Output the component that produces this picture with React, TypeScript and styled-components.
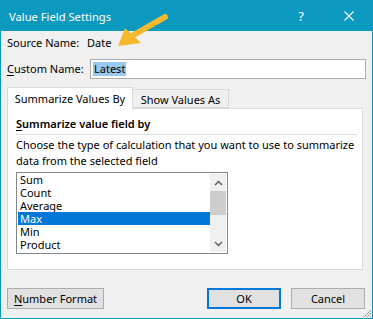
import React from "react";
import styled, { createGlobalStyle } from "styled-components";

const Global = createGlobalStyle`
  html, body { margin: 0; padding: 0; background: #ffffff; }
  * { box-sizing: border-box; }
`;

const FONT = `"Noto Sans", "Open Sans", sans-serif`;

const Window = styled.div`
  position: relative;
  width: 373px;
  height: 319px;
  background: #f0f0f0;
  border: 1px solid #0b99bf;
  border-top: none;
  font-family: ${FONT};
  font-size: 11px;
  color: #000;
  display: flex;
  flex-direction: column;
  overflow: hidden;
`;

const TitleBar = styled.div`
  height: 31px;
  margin: 0 -1px;
  background: #0b99bf;
  color: #fff;
  display: flex;
  align-items: center;
  padding-left: 9px;
  padding-right: 19px;
  font-size: 11.2px;
`;

const Title = styled.span`
  flex: 1;
  padding-top: 1px;
`;

const TitleButton = styled.span<{ $w: number }>`
  width: ${(p) => p.$w}px;
  display: flex;
  justify-content: center;
  align-items: center;
`;

const Body = styled.div`
  flex: 1;
  display: flex;
  flex-direction: column;
  padding: 4px 6px 0 6px;
`;

const Row = styled.div<{ $mt?: number }>`
  display: flex;
  align-items: center;
  line-height: 16px;
  margin-top: ${(p) => p.$mt ?? 0}px;
`;

const Label = styled.span<{ $w: number }>`
  width: ${(p) => p.$w}px;
  white-space: nowrap;
`;

const Input = styled.div`
  width: 276px;
  height: 20px;
  background: #fff;
  border: 1px solid #acacac;
  display: flex;
  align-items: center;
  padding-left: 2px;
`;

const Selected = styled.span`
  background: #99c9ef;
  line-height: 14px;
  padding: 0 1px;
`;

const U = styled.span`
  text-decoration: underline;
  text-underline-offset: 2px;
`;

const Tabs = styled.div`
  display: flex;
  align-items: flex-end;
  margin-top: 8px;
  height: 21px;
  position: relative;
  z-index: 1;
`;

const Tab = styled.div<{ $active?: boolean }>`
  height: ${(p) => (p.$active ? 22 : 19)}px;
  width: ${(p) => (p.$active ? 126 : 96)}px;
  background: ${(p) => (p.$active ? "#fff" : "#f0f0f0")};
  border: 1px solid #d9d9d9;
  border-bottom: ${(p) => (p.$active ? "none" : "1px solid #d9d9d9")};
  border-left: ${(p) => (p.$active ? "1px solid #d9d9d9" : "none")};
  display: flex;
  align-items: center;
  justify-content: center;
  white-space: nowrap;
  padding-top: ${(p) => (p.$active ? 0 : 1)}px;
  margin-bottom: ${(p) => (p.$active ? -1 : 0)}px;
`;

const Panel = styled.div`
  width: 356px;
  height: 162px;
  background: #fff;
  border: 1px solid #d9d9d9;
  padding: 7px 5px 0 8px;
  display: flex;
  flex-direction: column;
`;

const SectionTitle = styled.div`
  font-weight: 600;
  line-height: 16px;
  padding-bottom: 2px;
  border-bottom: 1px solid #dcdcdc;
`;

const Description = styled.div`
  line-height: 16px;
  margin-top: 2px;
  white-space: nowrap;
`;

const ListBox = styled.div`
  margin-top: 3px;
  width: 212px;
  height: 82px;
  border: 1px solid #828790;
  display: flex;
  background: #fff;
`;

const Items = styled.div`
  flex: 1;
  padding: 0 0 0 1px;
  display: flex;
  flex-direction: column;
`;

const Item = styled.div<{ $sel?: boolean }>`
  height: 13px;
  line-height: 13px;
  padding-left: 2px;
  background: ${(p) => (p.$sel ? "#0078d7" : "transparent")};
  color: ${(p) => (p.$sel ? "#fff" : "#000")};
`;

const ScrollBar = styled.div`
  width: 16px;
  margin: 1px 1px 1px 0;
  background: #f0f0f0;
  display: flex;
  flex-direction: column;
  align-items: center;
`;

const ScrollArrow = styled.div`
  height: 17px;
  width: 100%;
  display: flex;
  align-items: center;
  justify-content: center;
`;

const Thumb = styled.div`
  width: 100%;
  height: 24px;
  background: #cdcdcd;
`;

const Spacer = styled.div`
  flex: 1;
`;

const Buttons = styled.div`
  display: flex;
  margin-top: 18px;
  height: 21px;
`;

const Button = styled.div<{ $w: number; $focus?: boolean }>`
  width: ${(p) => p.$w}px;
  height: 21px;
  background: #e1e1e1;
  border: ${(p) => (p.$focus ? "2px solid #0078d7" : "1px solid #adadad")};
  display: flex;
  align-items: center;
  justify-content: center;
  white-space: nowrap;
`;

const Gap = styled.div<{ $w: number }>`
  width: ${(p) => p.$w}px;
`;

const Overlay = styled.svg`
  position: absolute;
  left: 0;
  top: 0;
  pointer-events: none;
`;

const Grip = styled.svg`
  position: absolute;
  right: 0;
  bottom: 0;
`;

export default function App() {
  return (
    <>
      <Global />
      <Window>
        <TitleBar>
          <Title>Value Field Settings</Title>
          <TitleButton $w={10}>
            <span style={{ fontSize: 13 }}>?</span>
          </TitleButton>
          <Gap $w={38} />
          <TitleButton $w={10}>
            <svg width="10" height="10" viewBox="0 0 10 10">
              <path d="M0.5 0.5 L9.5 9.5 M9.5 0.5 L0.5 9.5" stroke="#fff" strokeWidth="1.1" fill="none" />
            </svg>
          </TitleButton>
        </TitleBar>
        <Body>
          <Row>
            <Label $w={80}>Source Name:</Label>
            <span>Date</span>
          </Row>
          <Row $mt={8}>
            <Label $w={83}>
              <U>C</U>ustom Name:
            </Label>
            <Input>
              <Selected>Latest</Selected>
            </Input>
          </Row>
          <Tabs>
            <Tab $active>Summarize Values By</Tab>
            <Tab>Show Values As</Tab>
          </Tabs>
          <Panel>
            <SectionTitle>
              <U>S</U>ummarize value field by
            </SectionTitle>
            <Description>
              Choose the type of calculation that you want to use to summarize
              <br />
              data from the selected field
            </Description>
            <ListBox>
              <Items>
                <Item>Sum</Item>
                <Item>Count</Item>
                <Item>Average</Item>
                <Item $sel>Max</Item>
                <Item>Min</Item>
                <Item>Product</Item>
              </Items>
              <ScrollBar>
                <ScrollArrow>
                  <svg width="9" height="6" viewBox="0 0 9 6">
                    <path d="M1 5 L4.5 1.5 L8 5" stroke="#606060" strokeWidth="1.5" fill="none" />
                  </svg>
                </ScrollArrow>
                <Thumb />
                <Spacer />
                <ScrollArrow>
                  <svg width="9" height="6" viewBox="0 0 9 6">
                    <path d="M1 1 L4.5 4.5 L8 1" stroke="#606060" strokeWidth="1.5" fill="none" />
                  </svg>
                </ScrollArrow>
              </ScrollBar>
            </ListBox>
          </Panel>
          <Buttons>
            <Button $w={97}>
              <span>
                <U>N</U>umber Format
              </span>
            </Button>
            <Gap $w={103} />
            <Button $w={74} $focus>
              OK
            </Button>
            <Gap $w={10} />
            <Button $w={74}>Cancel</Button>
          </Buttons>
        </Body>
        <Overlay width="373" height="319" viewBox="0 0 373 319">
          <path d="M164 17 L129 37" stroke="#f4b92c" strokeWidth="6" strokeLinecap="round" fill="none" />
          <polygon points="117,46 124,28 140,43" fill="#f4b92c" />
        </Overlay>
        <Grip width="10" height="10" viewBox="0 0 10 10">
          <path d="M9 2 L2 9 M9 5 L5 9 M9 8 L8 9" stroke="#9a9a9a" strokeWidth="1" fill="none" />
        </Grip>
      </Window>
    </>
  );
}
